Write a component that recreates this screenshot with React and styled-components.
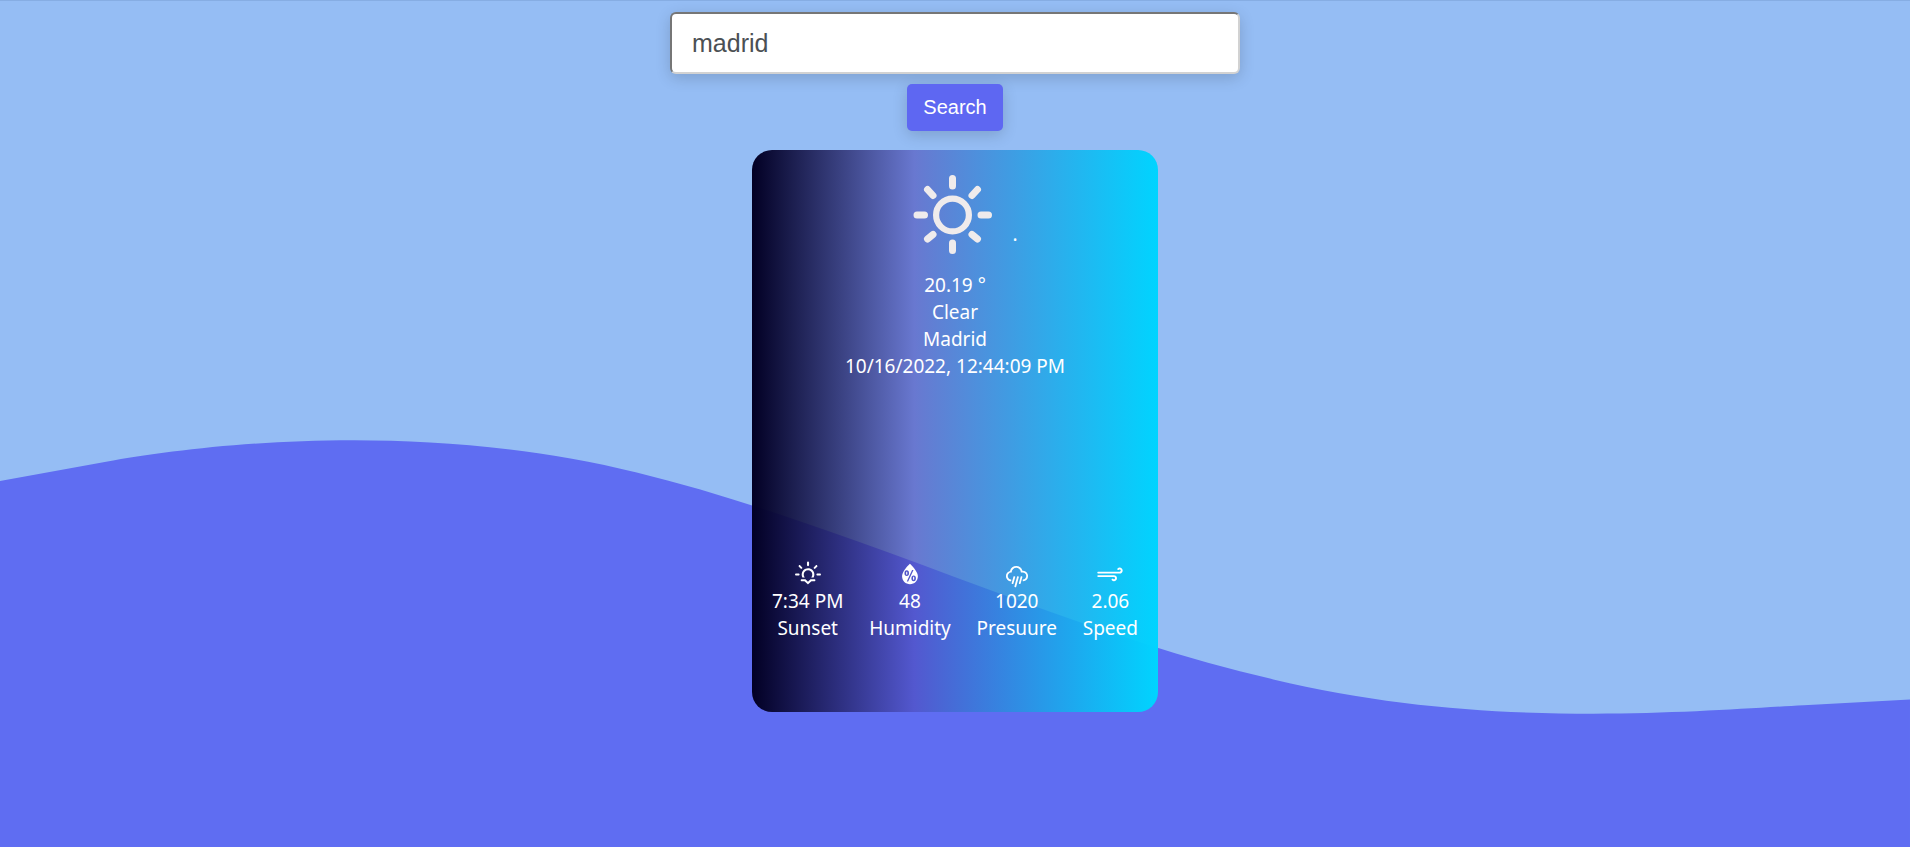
import React, { useState } from "react";
import styled, { createGlobalStyle } from "styled-components";
import { WiSunset, WiHumidity, WiRain, WiStrongWind } from "react-icons/wi";

const GlobalStyle = createGlobalStyle`
  *, *::before, *::after { box-sizing: border-box; }
  body {
    margin: 0;
    background: #95bdf4;
    font-family: "Noto Sans", "Open Sans", sans-serif;
  }
`;

const Page = styled.div`
  position: relative;
  display: flex;
  flex-direction: column;
  min-height: 100vh;
  border-top: 1px solid #86ade3;
`;

const Wave = styled.svg`
  position: absolute;
  left: 0;
  bottom: 0;
  width: 100%;
  height: auto;
  display: block;
`;

const Content = styled.main`
  position: relative;
  display: flex;
  flex-direction: column;
  align-items: center;
  padding: 11px 16px 20px;
`;

const SearchForm = styled.form`
  display: flex;
  flex-direction: column;
  align-items: center;
  gap: 10px;
  width: 100%;
  margin-bottom: 19px;
`;

const SearchInput = styled.input`
  width: 100%;
  max-width: 570px;
  height: 62px;
  padding: 0 20px;
  border: 2px solid;
  border-color: #767676 #d2d2d2 #d2d2d2 #767676;
  border-radius: 6px;
  background: #fff;
  color: #4b5054;
  font: 25px "Liberation Sans", Arial, sans-serif;
  box-shadow: 0 4px 15px rgba(0, 0, 0, 0.16);
  outline: none;
`;

const SearchButton = styled.button`
  height: 47px;
  padding: 0 16px;
  border: 0;
  border-radius: 5px;
  background: #5e67f2;
  color: #fff;
  font: 20px "Liberation Sans", Arial, sans-serif;
  box-shadow: 0 4px 15px rgba(0, 0, 0, 0.16);
  cursor: pointer;
`;

const Card = styled.section`
  display: flex;
  flex-direction: column;
  width: 100%;
  max-width: 406px;
  min-height: 562px;
  padding: 0 20px 70px;
  border-radius: 20px;
  background: linear-gradient(
    90deg,
    rgba(2, 0, 36, 1) 0%,
    rgba(75, 74, 184, 0.6) 40%,
    rgba(0, 212, 255, 1) 100%
  );
  color: #fff;
  font-size: 19px;
  line-height: 27px;
  text-align: center;
`;

const Condition = styled.div`
  display: flex;
  justify-content: center;
  align-items: flex-end;
  height: 122px;
`;

const SunIcon = styled.svg`
  width: 120px;
  height: 120px;
`;

const Dot = styled.span`
  padding-bottom: 24px;
`;

const Summary = styled.div`
  display: flex;
  flex-direction: column;
`;

const Stats = styled.div`
  display: flex;
  justify-content: space-between;
  margin-top: auto;
`;

const Stat = styled.div`
  display: flex;
  flex-direction: column;
  align-items: center;
`;

const StatIcon = styled.span`
  display: flex;
  height: 30px;
  font-size: 32px;
`;

const stats = [
  { icon: WiSunset, value: "7:34 PM", label: "Sunset" },
  { icon: WiHumidity, value: "48", label: "Humidity" },
  { icon: WiRain, value: "1020", label: "Presuure" },
  { icon: WiStrongWind, value: "2.06", label: "Speed" },
];

function Sun() {
  return (
    <SunIcon viewBox="0 0 120 120" fill="none" stroke="#efebec" strokeLinecap="round" aria-hidden="true">
      <circle cx="60.5" cy="63" r="16.4" strokeWidth="6.2" />
      <path
        strokeWidth="7"
        d="M60.5 26.5v7.5M60.5 91v7.5M25 63h7.5M89 63h7.5M35.5 37.5l5.5 6M85.5 37.5l-5.5 6M35.5 87l5.5-4.5M85.5 87l-5.5-4.5"
      />
    </SunIcon>
  );
}

export default function App() {
  const [city, setCity] = useState("madrid");
  return (
    <>
      <GlobalStyle />
      <Page>
        <Wave viewBox="0 0 1440 320" aria-hidden="true">
          <path
            fill="#5f6df2"
            d="M0 43.8L80 29.2C160 14.8 320 -2 480 37.3C640 76.4 800 156.5 960 193.3C1120 232 1280 217 1360 212.8L1440 208.5V320H0Z"
          />
        </Wave>
        <Content>
          <SearchForm onSubmit={(event) => event.preventDefault()}>
            <SearchInput
              type="text"
              aria-label="City"
              value={city}
              onChange={(event) => setCity(event.target.value)}
            />
            <SearchButton type="submit">Search</SearchButton>
          </SearchForm>
          <Card>
            <Condition>
              <Sun />
              <Dot>.</Dot>
            </Condition>
            <Summary>
              <span>20.19 °</span>
              <span>Clear</span>
              <span>Madrid</span>
              <span>10/16/2022, 12:44:09 PM</span>
            </Summary>
            <Stats>
              {stats.map(({ icon: Icon, value, label }) => (
                <Stat key={label}>
                  <StatIcon>
                    <Icon />
                  </StatIcon>
                  <span>{value}</span>
                  <span>{label}</span>
                </Stat>
              ))}
            </Stats>
          </Card>
        </Content>
      </Page>
    </>
  );
}
